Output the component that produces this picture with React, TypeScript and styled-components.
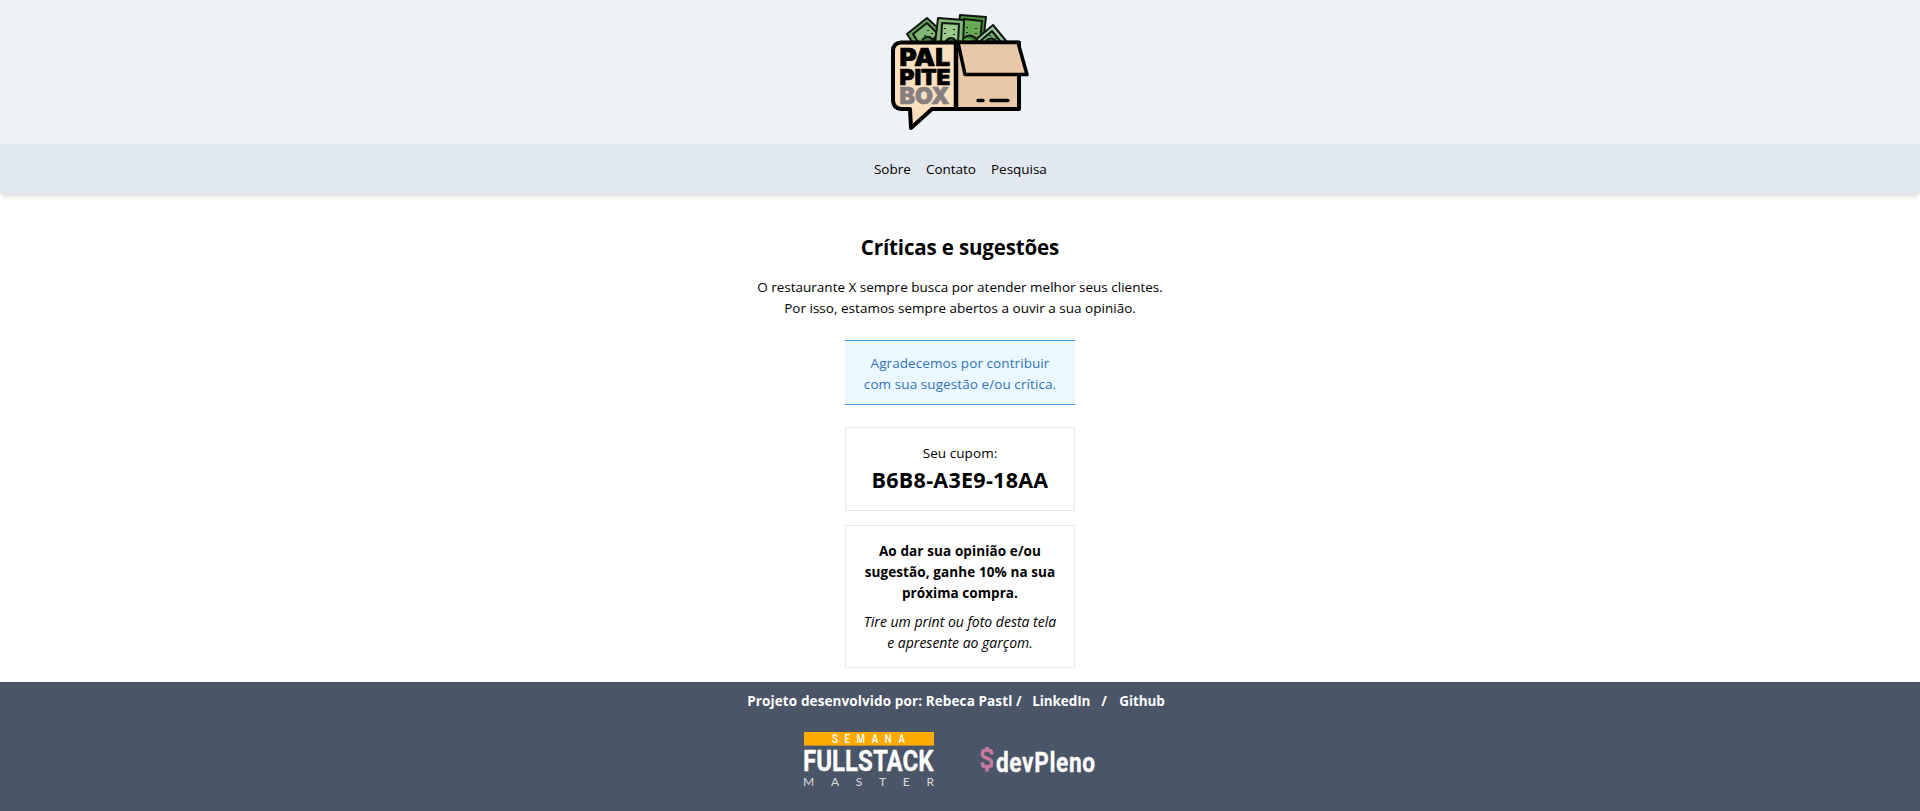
import React from 'react';
import styled, { createGlobalStyle } from 'styled-components';

const GlobalStyle = createGlobalStyle`
  *, *::before, *::after { box-sizing: border-box; }
  html { font-size: 14px; }
  body {
    margin: 0;
    background: #fff;
    color: #000;
    font-family: 'Open Sans', 'Noto Sans', sans-serif;
    font-size: 13.5px;
    line-height: 21px;
  }
  h1, p { margin: 0; }
  a { color: inherit; text-decoration: none; }
  svg { overflow: visible; }
`;

const Page = styled.div`
  display: flex;
  flex-direction: column;
  min-height: 811px;
`;

const Header = styled.header`
  display: flex;
  justify-content: center;
  height: 144px;
  padding: 14px 0;
  background: #edf2f7;
`;

const Nav = styled.nav`
  display: flex;
  justify-content: center;
  height: 50px;
  padding: 15px 0 0;
  background: #e2e8f0;
  border-radius: 0 0 4px 4px;
  box-shadow: 0 4px 6px -1px rgba(0, 0, 0, 0.1), 0 2px 4px -1px rgba(0, 0, 0, 0.06);
`;

const NavLink = styled.a<{ $width: number }>`
  width: ${({ $width }) => $width}px;
  letter-spacing: -0.03px;
  white-space: nowrap;
`;

const Main = styled.main`
  display: flex;
  flex: none;
  flex-direction: column;
  align-items: center;
  height: 488px;
  padding-top: 38px;
  text-align: center;
`;

const Title = styled.h1`
  font-size: 20.5px;
  line-height: 31.5px;
  font-weight: 700;
  letter-spacing: -0.14px;
`;

const Line = styled.span<{ $spacing?: number }>`
  display: block;
  letter-spacing: ${({ $spacing = 0 }) => $spacing}px;
  white-space: nowrap;
`;

const Intro = styled.p`
  margin-top: 13.5px;
`;

const Notice = styled.div`
  width: 230px;
  height: 65px;
  margin-top: 21px;
  padding: 12px 0 0;
  color: #3273b8;
  background: #ebf8ff;
  border-top: 1px solid #4299e1;
  border-bottom: 1px solid #4299e1;
`;

const Card = styled.section<{ $height: number; $gap: number }>`
  width: 230px;
  height: ${({ $height }) => $height}px;
  margin-top: ${({ $gap }) => $gap}px;
  padding-top: 15px;
  border: 1px solid #e2e8f0;
`;

const Code = styled.p`
  font-size: 21.5px;
  line-height: 31px;
  font-weight: 700;
  letter-spacing: 0.27px;
`;

const Offer = styled.p`
  font-weight: 700;
`;

const Hint = styled.p`
  margin-top: 7px;
  font-size: 14px;
  font-style: italic;
`;

const Footer = styled.footer`
  flex: 1;
  padding-top: 9px;
  color: #fff;
  background: #4a5568;
`;

const Credits = styled.div`
  display: flex;
  justify-content: center;
  padding-right: 7px;
  font-weight: 700;
  white-space: nowrap;
`;

const Credit = styled.span<{ $width: number; $spacing: number }>`
  flex: none;
  width: ${({ $width }) => $width}px;
  letter-spacing: ${({ $spacing }) => $spacing}px;
`;

const Sponsors = styled.div`
  display: flex;
  justify-content: center;
  gap: 46px;
  padding: 20px 21px 0 0;
`;

const BoxLogo = () => (
  <svg width="138" height="116" viewBox="0 0 138 116" aria-label="Palpite Box">
    <g stroke="#10150f" strokeWidth="2" strokeLinejoin="round">
      <path d="M16 20 36 4l15 14-5 14H24z" fill="#67a657" />
      <path d="m22 20 14-11 11 11-7 8H27z" fill="#82b875" />
      <path d="m69 1 26 2-3 26H66z" fill="#4b963f" />
      <path d="m73 5 18 2-2 21H70z" fill="#69ab55" />
      <path d="m47 4 26 2-1 24H44z" fill="#82b875" />
      <path d="m51 9 17 1-1 18H50z" fill="#9bc88c" />
      <path d="m102 11 14 17H82z" fill="#9bc99a" />
      <path d="m101 17 9 11H88z" fill="#70a96a" />
      <path d="M54 28q6-8 12 0M73 24q7-6 14 3M31 26q6-7 12 1M94 28q6-7 12 0" fill="#397f37" />
    </g>
    <path d="M54 14v1m0 4v1m9-5v1m0 4v1m13-8v1m0 4v1m9-5v1m0 4v1M37 16v1m-3 4v1m7-3v1M99 21v1m6 2v1" stroke="#12200e" strokeWidth="2" />
    <path d="M10 28.500H65V95H41L20 114l-1-19H10q-8-1-8-9V37q0-8 8-8.500Z" fill="#fbdfbf" stroke="#000" strokeWidth="4" strokeLinejoin="round" />
    <path d="M65 28.500H128V95H65Z" fill="#e9c8a9" stroke="#000" strokeWidth="4" strokeLinejoin="round" />
    <path d="M67 28.500h60l9 32H74Z" fill="#e9c8a9" stroke="#000" strokeWidth="3.500" strokeLinejoin="round" />
    <path d="M65 28V96" stroke="#000" strokeWidth="4.500" />
    <path d="M87 86.500h5M100 86.500h17" stroke="#000" strokeWidth="3.400" strokeLinecap="round" />
    <g fontFamily="Inter, 'Liberation Sans', sans-serif" fontWeight="900" strokeWidth=".7">
      <text x="8.500" y="52" fontSize="24" textLength="50.500" lengthAdjust="spacingAndGlyphs" stroke="#000">PAL</text>
      <text x="8.500" y="71" fontSize="21" textLength="51" lengthAdjust="spacingAndGlyphs" stroke="#000">PITE</text>
      <text x="8.500" y="90" fontSize="22.500" textLength="50" lengthAdjust="spacingAndGlyphs" fill="#85807f" stroke="#85807f">BOX</text>
    </g>
  </svg>
);

const FullstackLogo = () => (
  <svg width="130" height="56" viewBox="0 0 130 56" aria-label="Semana Fullstack Master">
    <path d="M0 0h130v13H0z" fill="#ffaa00" />
    <path d="M0 13h130v1H0z" fill="#b4873b" />
    <g fill="#fff">
      <text transform="translate(28 11) scale(.8 1)" fontFamily="Roboto, sans-serif" fontWeight="500" fontSize="12" textLength="91">SEMANA</text>
      <text x="-1" y="38.700" fontFamily="Roboto, sans-serif" fontWeight="700" fontSize="30" textLength="130.500" lengthAdjust="spacingAndGlyphs" stroke="#fff" strokeWidth=".3">FULLSTACK</text>
      <text x="-1" y="54" fontFamily="Lato, sans-serif" fontSize="12" textLength="131" fillOpacity=".8">MASTER</text>
    </g>
  </svg>
);

const DevPlenoLogo = () => (
  <svg width="115" height="56" viewBox="0 0 115 56" aria-label="devPleno">
    <path d="M11.500 22.500v-1.500q0-2.500-2.500-2.500H5q-2.500 0-2.500 2.500v1.500q0 1.600 2 2.600l5 2.300q2 1 2 2.600V32q0 2.500-2.500 2.500H5q-2.500 0-2.500-2.500v-1.500M7 15v4M7 34v5.500" fill="none" stroke="#c6799f" strokeWidth="3.600" />
    <text transform="translate(16 39.500) scale(.84 1)" fontFamily="Roboto, sans-serif" fontWeight="700" fontSize="27" textLength="118" fill="#fff" stroke="#fff" strokeWidth=".3">devPleno</text>
  </svg>
);

export default function App() {
  return (
    <Page>
      <GlobalStyle />
      <Header>
        <BoxLogo />
      </Header>
      <Nav>
        <NavLink href="#" $width={52}>Sobre</NavLink>
        <NavLink href="#" $width={65}>Contato</NavLink>
        <NavLink href="#" $width={55}>Pesquisa</NavLink>
      </Nav>
      <Main>
        <Title>Críticas e sugestões</Title>
        <Intro>
          <Line>O restaurante X sempre busca por atender melhor seus clientes.</Line>
          <Line $spacing={0.02}>Por isso, estamos sempre abertos a ouvir a sua opinião.</Line>
        </Intro>
        <Notice>
          <Line $spacing={0.08}>Agradecemos por contribuir</Line>
          <Line $spacing={0.08}>com sua sugestão e/ou crítica.</Line>
        </Notice>
        <Card $height={84} $gap={22}>
          <Line $spacing={0.07}>Seu cupom:</Line>
          <Code>B6B8-A3E9-18AA</Code>
        </Card>
        <Card $height={143} $gap={14}>
          <Offer>
            <Line $spacing={0.11}>Ao dar sua opinião e/ou</Line>
            <Line $spacing={0.1}>sugestão, ganhe 10% na sua</Line>
            <Line $spacing={0.06}>próxima compra.</Line>
          </Offer>
          <Hint>
            <Line>Tire um print ou foto desta tela</Line>
            <Line>e apresente ao garçom.</Line>
          </Hint>
        </Card>
      </Main>
      <Footer>
        <Credits>
          <Credit $width={285} $spacing={0.11}>Projeto desenvolvido por: Rebeca Pastl /</Credit>
          <Credit $width={69} $spacing={-0.1}>LinkedIn</Credit>
          <Credit $width={18} $spacing={0}>/</Credit>
          <Credit $width={46.5} $spacing={-0.1}>Github</Credit>
        </Credits>
        <Sponsors>
          <FullstackLogo />
          <DevPlenoLogo />
        </Sponsors>
      </Footer>
    </Page>
  );
}
